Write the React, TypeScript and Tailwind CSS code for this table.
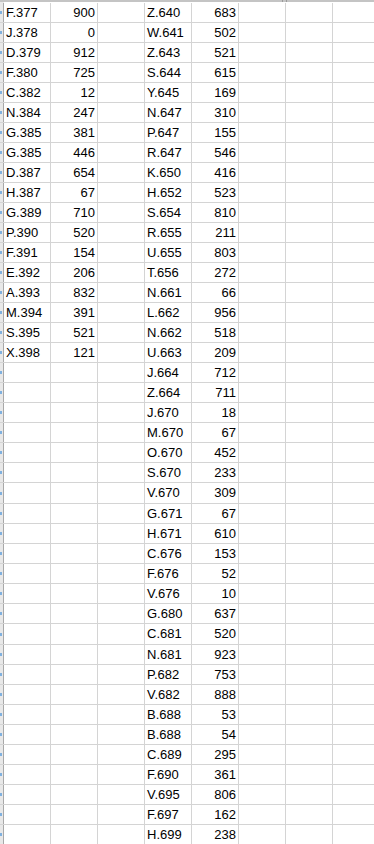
const left: [string, number][] = [
  ['F.377', 900], ['J.378', 0], ['D.379', 912], ['F.380', 725], ['C.382', 12],
  ['N.384', 247], ['G.385', 381], ['G.385', 446], ['D.387', 654], ['H.387', 67],
  ['G.389', 710], ['P.390', 520], ['F.391', 154], ['E.392', 206], ['A.393', 832],
  ['M.394', 391], ['S.395', 521], ['X.398', 121],
]

const right: [string, number][] = [
  ['Z.640', 683], ['W.641', 502], ['Z.643', 521], ['S.644', 615], ['Y.645', 169],
  ['N.647', 310], ['P.647', 155], ['R.647', 546], ['K.650', 416], ['H.652', 523],
  ['S.654', 810], ['R.655', 211], ['U.655', 803], ['T.656', 272], ['N.661', 66],
  ['L.662', 956], ['N.662', 518], ['U.663', 209], ['J.664', 712], ['Z.664', 711],
  ['J.670', 18], ['M.670', 67], ['O.670', 452], ['S.670', 233], ['V.670', 309],
  ['G.671', 67], ['H.671', 610], ['C.676', 153], ['F.676', 52], ['V.676', 10],
  ['G.680', 637], ['C.681', 520], ['N.681', 923], ['P.682', 753], ['V.682', 888],
  ['B.688', 53], ['B.688', 54], ['C.689', 295], ['F.690', 361], ['V.695', 806],
  ['F.697', 162], ['H.699', 238],
]

// a couple of rows come out one pixel taller in the sheet
const tallRows = [24, 31]

function Cell({ value, num }: { value?: string | number; num?: boolean }) {
  return (
    <div
      className={`w-[47px] shrink-0 h-full border-r border-[#d4d4d4] px-[2px] flex items-center whitespace-nowrap ${
        num ? 'justify-end' : 'justify-start'
      }`}
    >
      {value ?? ''}
    </div>
  )
}

export default function App() {
  return (
    <div
      className="w-[374px] h-[844px] overflow-hidden bg-white text-[13px] text-black"
      style={{ fontFamily: '"Liberation Sans", Arial, sans-serif' }}
    >
      {/* header edge */}
      <div className="flex h-[3px] border-t-2 border-[#c4c4c4] bg-white">
        <div className="w-[4px] shrink-0 bg-[#e8e8e8]" />
        <div className="w-[278px] shrink-0" />
        <div className="w-px h-[2px] -mt-[2px] bg-[#9a9a9a]" />
        <div className="w-[3px]" />
        <div className="w-px h-[2px] -mt-[2px] bg-[#9a9a9a]" />
      </div>

      {right.map((r, i) => {
        const l = left[i]
        return (
          <div
            key={i}
            className={`flex border-b border-[#d4d4d4] ${tallRows.includes(i) ? 'h-[21px]' : 'h-5'}`}
          >
            <div className="w-[4px] shrink-0 h-full flex items-center bg-[#e8e8e8] border-r border-[#a8a8a8]">
              <span className="w-[2px] h-[3px] bg-[#7fb0de]" />
            </div>
            <Cell value={l?.[0]} />
            <Cell value={l?.[1]} num />
            <Cell />
            <Cell value={r[0]} />
            <Cell value={r[1]} num />
            <Cell />
            <Cell />
            <Cell />
          </div>
        )
      })}
    </div>
  )
}
